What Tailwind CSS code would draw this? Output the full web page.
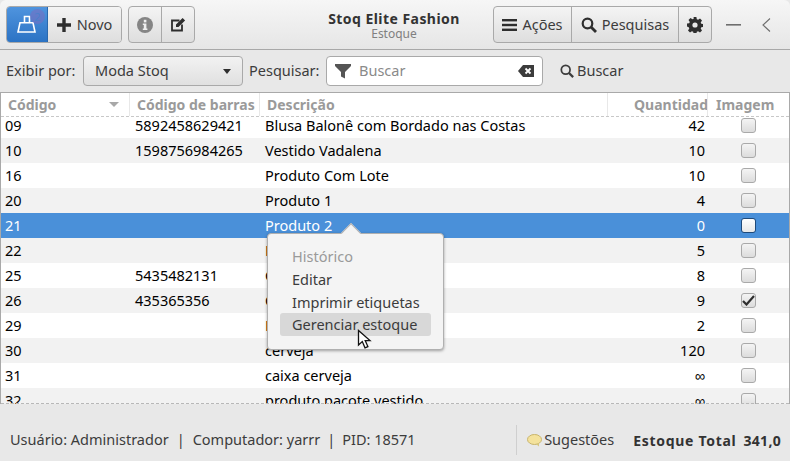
<!DOCTYPE html>
<html lang="en">
<head>
  <meta charset="UTF-8">
  <title>Stoq Elite Fashion</title>
  <script src="https://cdn.jsdelivr.net/npm/@tailwindcss/browser@4"></script>
</head>
<body class="w-[790px] h-[461px] overflow-hidden bg-[#e8e8e8] text-[14.5px] text-[#3c3c3c] font-['Noto_Sans',sans-serif]">
  <!-- header bar -->
  <header class="h-[50px] flex items-start pt-[6px] px-[6px] bg-gradient-to-b from-[#f6f6f6] to-[#e6e6e6] border-b border-[#a8a8a8] rounded-t-[6px]">
    <div class="flex h-[37px] w-[116px] rounded-[4px] border border-[#a9a9a9]">
      <button class="w-[41px] flex items-center justify-center relative rounded-l-[3px] border-r border-[#2a68ad] bg-gradient-to-b from-[#4f94de] to-[#2b73c4]">
        <svg width="24" height="24" viewBox="0 0 24 24" fill="none" stroke="#fff" stroke-width="1.6"><path d="M9.500 9.500 V3.500 h5 v6"/><path d="M5 9.800 h13 l2 9.200 h-17 z"/></svg>
        <span class="absolute left-[23px] top-[2px] w-[15px] h-[15px] rounded-full bg-[#7a6ec0]/55 text-[#4a80cc] text-[11px] leading-[15px] text-center">2</span>
      </button>
      <button class="flex-1 flex items-center justify-center gap-[6px] rounded-r-[3px] bg-gradient-to-b from-[#f4f4f4] to-[#dedede]">
        <svg width="14" height="14" viewBox="0 0 14 14" fill="#2e2e2e"><path d="M5.300 0h3.400v5.300H14v3.400H8.700V14H5.300V8.700H0V5.300h5.300z"/></svg>
        <span>Novo</span>
      </button>
    </div>
    <div class="flex h-[37px] w-[67px] ml-[6px] rounded-[4px] border border-[#a9a9a9] bg-gradient-to-b from-[#f4f4f4] to-[#dedede]">
      <button class="w-[33px] flex items-center justify-center border-r border-[#a9a9a9]">
        <svg width="16" height="16" viewBox="0 0 16 16"><circle cx="8" cy="8" r="8" fill="#858585"/><rect x="6.800" y="2.800" width="2.600" height="2.600" fill="#eee"/><path d="M5.800 6.600h3.600v5h1v1.400H5.800v-1.400h1v-3.600h-1z" fill="#eee"/></svg>
      </button>
      <button class="flex-1 flex items-center justify-center">
        <svg width="17" height="17" viewBox="0 0 17 17" fill="none"><path d="M12 8.500 v6 H2 V4.500 h7.500" stroke="#2e2e2e" stroke-width="1.800"/><path d="M6 8.500 L12.600 1.900 l2.500 2.500 L8.500 11 H6z" fill="#2e2e2e"/></svg>
      </button>
    </div>
    <div class="flex-1 flex flex-col items-center pt-[5px] pl-[100px] leading-[15px]">
      <span class="font-bold text-[14px] tracking-[0.45px] text-[#333] whitespace-nowrap">Stoq Elite Fashion</span>
      <span class="text-[12px] text-[#808080]">Estoque</span>
    </div>
    <div class="flex h-[37px] w-[219px] rounded-[4px] border border-[#a9a9a9] bg-gradient-to-b from-[#f4f4f4] to-[#dedede]">
      <button class="w-[78px] flex items-center justify-center gap-[5px] border-r border-[#a9a9a9]">
        <svg width="15" height="14" viewBox="0 0 15 14" fill="#2e2e2e"><rect y="1" width="15" height="2.400"/><rect y="5.800" width="15" height="2.400"/><rect y="10.600" width="15" height="2.400"/></svg>
        <span>Ações</span>
      </button>
      <button class="w-[107px] flex items-center justify-center gap-[5px] border-r border-[#a9a9a9]">
        <svg width="16" height="16" viewBox="0 0 16 16" fill="none" stroke="#2e2e2e" stroke-width="2.200"><circle cx="6.500" cy="6.500" r="4.800"/><path d="M10 10l5 5" stroke-width="2.800"/></svg>
        <span>Pesquisas</span>
      </button>
      <button class="flex-1 flex items-center justify-center">
        <svg width="16" height="16" viewBox="0 0 16 16"><path d="M6.600 0h2.800l.4 2.200 1.300.6 1.900-1.300 2 2-1.300 1.900.6 1.300 2.200.4v2.800l-2.200.4-.6 1.300 1.300 1.900-2 2-1.900-1.300-1.300.6-.4 2.200H6.600l-.4-2.200-1.300-.6-1.900 1.300-2-2 1.300-1.900-.6-1.300L0 9.400V6.600l2.200-.4.6-1.300-1.300-1.900 2-2 1.900 1.300 1.300-.6z" fill="#2e2e2e"/><circle cx="8" cy="8" r="2.600" fill="#e8e8e8"/></svg>
      </button>
    </div>
    <div class="w-[72px] h-[37px] flex items-center">
      <svg class="ml-[14px]" width="15" height="2" viewBox="0 0 15 2"><rect width="15" height="1.600" fill="#6e6e6e"/></svg>
      <svg class="ml-[21px]" width="9" height="14" viewBox="0 0 9 14" fill="none" stroke="#6e6e6e" stroke-width="1.100"><path d="M8 0.500 L1 7 L8 13.500"/></svg>
    </div>
  </header>

  <!-- filter bar -->
  <div class="h-[42px] flex items-center pl-[6px] bg-[#e8e8e8]">
    <span class="w-[77px]">Exibir por:</span>
    <div class="w-[160px] h-[30px] flex items-center justify-between pl-[11px] pr-[11px] rounded-[4px] border border-[#a9a9a9] bg-gradient-to-b from-[#f2f2f2] to-[#e0e0e0]">
      <span>Moda Stoq</span>
      <span class="w-0 h-0 border-x-[4.500px] border-x-transparent border-t-[5px] border-t-[#2e2e2e]"></span>
    </div>
    <span class="w-[83px] pl-[6px]">Pesquisar:</span>
    <div class="w-[217px] h-[30px] flex items-center pl-[8px] pr-[8px] rounded-[4px] border border-[#a9a9a9] bg-white">
      <svg width="16" height="16" viewBox="0 0 16 16" fill="#555"><path d="M0 1h16v2l-6 6v6.500l-4-2V9L0 3z"/></svg>
      <span class="ml-[8px] text-[#8a8a8a]">Buscar</span>
      <svg class="ml-auto" width="16" height="12" viewBox="0 0 16 12"><path d="M5 0h11v12H5L0 6z" fill="#3c3c3c"/><path d="M7.500 3.500l5 5m0-5l-5 5" stroke="#fff" stroke-width="1.800"/></svg>
    </div>
    <div class="ml-[17px] flex items-center gap-[3px]">
      <svg width="14" height="14" viewBox="0 0 16 16" fill="none" stroke="#3c3c3c" stroke-width="2"><circle cx="6.500" cy="6.500" r="5"/><path d="M10 10l5 5" stroke-width="2.600"/></svg>
      <span>Buscar</span>
    </div>
  </div>

  <!-- product table -->
  <div class="relative h-[312px] overflow-hidden border-t border-x border-[#a9a9a9] bg-white text-black">
    <div class="relative z-10 grid grid-cols-[129px_130px_348px_100px_1fr] h-[24px] items-center font-bold text-[14px] text-[#9a9a9a] border-b border-dashed border-[#c8c8c8] bg-white">
      <div class="flex items-center justify-between pl-[7px] pr-[10px] border-r border-[#e8e8e8] h-full">Código<span class="w-0 h-0 border-x-[5px] border-x-transparent border-t-[5px] border-t-[#a8a8a8]"></span></div>
      <div class="flex items-center pl-[7px] border-r border-[#e8e8e8] h-full whitespace-nowrap">Código de barras</div>
      <div class="flex items-center pl-[7px] border-r border-[#e8e8e8] h-full">Descrição</div>
      <div class="flex items-center pl-[26px] border-r border-[#e8e8e8] h-full overflow-hidden whitespace-nowrap">Quantidade</div>
      <div class="flex items-center pl-[8px] h-full">Imagem</div>
    </div>
    <div class="-mt-[4px]">
      <div class="grid grid-cols-[129px_130px_348px_100px_1fr] h-[25px] items-center"><span class="pl-[4px]">09</span><span class="pl-[5px]">5892458629421</span><span class="pl-[5px]">Blusa Balonê com Bordado nas Costas</span><span class="text-right pr-[3px]">42</span><span class="ml-[33px] w-[15px] h-[15px] rounded-[3px] border border-[#a9a9a9] bg-gradient-to-b from-[#f4f4f4] to-[#dcdcdc]"></span></div>
      <div class="grid grid-cols-[129px_130px_348px_100px_1fr] h-[25px] items-center bg-[#f2f2f2]"><span class="pl-[4px]">10</span><span class="pl-[5px]">1598756984265</span><span class="pl-[5px]">Vestido Vadalena</span><span class="text-right pr-[3px]">10</span><span class="ml-[33px] w-[15px] h-[15px] rounded-[3px] border border-[#a9a9a9] bg-gradient-to-b from-[#f4f4f4] to-[#dcdcdc]"></span></div>
      <div class="grid grid-cols-[129px_130px_348px_100px_1fr] h-[25px] items-center"><span class="pl-[4px]">16</span><span></span><span class="pl-[5px]">Produto Com Lote</span><span class="text-right pr-[3px]">10</span><span class="ml-[33px] w-[15px] h-[15px] rounded-[3px] border border-[#a9a9a9] bg-gradient-to-b from-[#f4f4f4] to-[#dcdcdc]"></span></div>
      <div class="grid grid-cols-[129px_130px_348px_100px_1fr] h-[25px] items-center bg-[#f2f2f2]"><span class="pl-[4px]">20</span><span></span><span class="pl-[5px]">Produto 1</span><span class="text-right pr-[3px]">4</span><span class="ml-[33px] w-[15px] h-[15px] rounded-[3px] border border-[#a9a9a9] bg-gradient-to-b from-[#f4f4f4] to-[#dcdcdc]"></span></div>
      <div class="grid grid-cols-[129px_130px_348px_100px_1fr] h-[25px] items-center bg-[#4a90d9] text-white"><span class="pl-[4px]">21</span><span></span><span class="pl-[5px]">Produto 2</span><span class="text-right pr-[3px]">0</span><span class="ml-[33px] w-[15px] h-[15px] rounded-[3px] border border-[#1f4a7a] bg-gradient-to-b from-[#ffffff] to-[#e8e8e8]"></span></div>
      <div class="grid grid-cols-[129px_130px_348px_100px_1fr] h-[25px] items-center bg-[#f2f2f2]"><span class="pl-[4px]">22</span><span></span><span class="pl-[5px] text-[#8a3000]">P</span><span class="text-right pr-[3px]">5</span><span class="ml-[33px] w-[15px] h-[15px] rounded-[3px] border border-[#a9a9a9] bg-gradient-to-b from-[#f4f4f4] to-[#dcdcdc]"></span></div>
      <div class="grid grid-cols-[129px_130px_348px_100px_1fr] h-[25px] items-center"><span class="pl-[4px]">25</span><span class="pl-[5px]">5435482131</span><span class="pl-[5px]">C</span><span class="text-right pr-[3px]">8</span><span class="ml-[33px] w-[15px] h-[15px] rounded-[3px] border border-[#a9a9a9] bg-gradient-to-b from-[#f4f4f4] to-[#dcdcdc]"></span></div>
      <div class="grid grid-cols-[129px_130px_348px_100px_1fr] h-[25px] items-center bg-[#f2f2f2]"><span class="pl-[4px]">26</span><span class="pl-[5px]">435365356</span><span class="pl-[5px]">C</span><span class="text-right pr-[3px]">9</span><span class="ml-[33px] w-[15px] h-[15px] rounded-[3px] border border-[#a9a9a9] bg-gradient-to-b from-[#f4f4f4] to-[#dcdcdc] flex items-center justify-center"><svg width="13" height="11" viewBox="0 0 13 11" fill="none" stroke="#2e2e2e" stroke-width="2.200"><path d="M1 6l3.500 3.500L12 1"/></svg></span></div>
      <div class="grid grid-cols-[129px_130px_348px_100px_1fr] h-[25px] items-center"><span class="pl-[4px]">29</span><span></span><span class="pl-[5px] text-[#8a3000]">P</span><span class="text-right pr-[3px]">2</span><span class="ml-[33px] w-[15px] h-[15px] rounded-[3px] border border-[#a9a9a9] bg-gradient-to-b from-[#f4f4f4] to-[#dcdcdc]"></span></div>
      <div class="grid grid-cols-[129px_130px_348px_100px_1fr] h-[25px] items-center bg-[#f2f2f2]"><span class="pl-[4px]">30</span><span></span><span class="pl-[5px]">cerveja</span><span class="text-right pr-[3px]">120</span><span class="ml-[33px] w-[15px] h-[15px] rounded-[3px] border border-[#a9a9a9] bg-gradient-to-b from-[#f4f4f4] to-[#dcdcdc]"></span></div>
      <div class="grid grid-cols-[129px_130px_348px_100px_1fr] h-[25px] items-center"><span class="pl-[4px]">31</span><span></span><span class="pl-[5px]">caixa cerveja</span><span class="text-right pr-[3px]">∞</span><span class="ml-[33px] w-[15px] h-[15px] rounded-[3px] border border-[#a9a9a9] bg-gradient-to-b from-[#f4f4f4] to-[#dcdcdc]"></span></div>
      <div class="grid grid-cols-[129px_130px_348px_100px_1fr] h-[25px] items-center bg-[#f2f2f2]"><span class="pl-[4px]">32</span><span></span><span class="pl-[5px]">produto pacote vestido</span><span class="text-right pr-[3px]">∞</span><span class="ml-[33px] w-[15px] h-[15px] rounded-[3px] border border-[#a9a9a9] bg-gradient-to-b from-[#f4f4f4] to-[#dcdcdc]"></span></div>
    </div>
    <div class="absolute left-0 right-0 bottom-0 border-b border-dashed border-[#b8b8b8]"></div>

    <!-- context menu -->
    <div class="absolute z-20 left-[266px] top-[140px] w-[177px] h-[117px] rounded-[4px] border border-[#b0b0b0] bg-[#f4f4f4] shadow-[0_1px_3px_rgba(0,0,0,0.35)] px-[12px] pt-[12px] text-[#3c3c3c]">
      <span class="absolute -top-[8px] left-[76px] w-[14px] h-[14px] rotate-45 bg-[#f4f4f4] border-l border-t border-[#b0b0b0]"></span>
      <div class="relative h-[23px] leading-[20px] px-[12px] text-[#9a9a9a]">Histórico</div>
      <div class="h-[23px] leading-[20px] px-[12px]">Editar</div>
      <div class="h-[23px] leading-[20px] px-[12px] whitespace-nowrap">Imprimir etiquetas</div>
      <div class="-mt-[2px] h-[23px] leading-[22px] px-[12px] rounded-[3px] bg-[#d8d8d8] whitespace-nowrap">Gerenciar estoque</div>
      <svg class="absolute left-[89px] top-[95px]" width="15" height="21" viewBox="0 0 15 21"><path d="M1.500 1.500v14.500l3.800-3.400 2.700 6.200 2.900-1.200-2.700-6h4.800z" fill="#fff" stroke="#111" stroke-width="1.300"/></svg>
    </div>
  </div>

  <!-- status bar -->
  <footer class="h-[57px] flex items-center pt-[15px] pl-[10px] pr-[9px] bg-[#e8e8e8]">
    <span>Usuário: Administrador</span><span class="mx-[8px]">|</span><span>Computador: yarrr</span><span class="mx-[7px]">|</span><span>PID: 18571</span>
    <div class="ml-auto h-[30px] flex items-center border-l border-[#cfcfcf] pl-[10px]">
      <svg width="15" height="13" viewBox="0 0 15 13"><ellipse cx="7.500" cy="5.500" rx="7" ry="5" fill="#f4e29c" stroke="#c8b46c"/><path d="M9 10l3 2.500v-3.500z" fill="#d8c67c"/></svg>
      <span class="ml-[2px]">Sugestões</span>
      <span class="ml-[19px] font-bold text-[14px] tracking-[0.7px] text-[#333] whitespace-nowrap">Estoque Total</span>
      <span class="ml-[7px] font-bold text-[14px] tracking-[0.3px] text-[#333] whitespace-nowrap">341,0</span>
    </div>
  </footer>
</body>
</html>
